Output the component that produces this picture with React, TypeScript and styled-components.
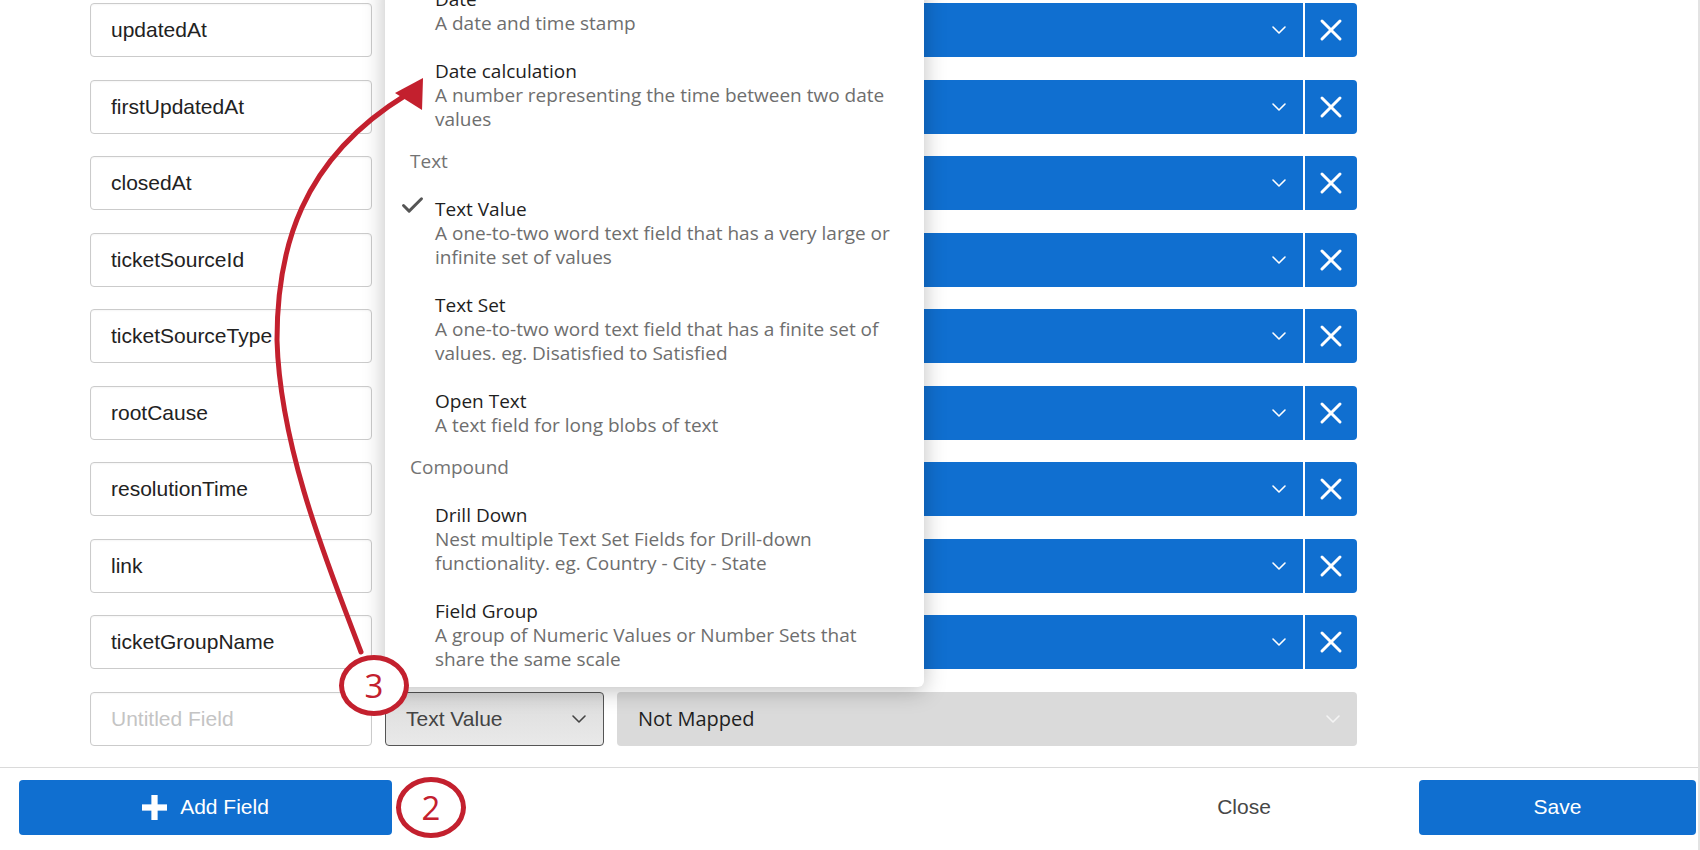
import React from 'react'
import styled, { createGlobalStyle } from 'styled-components'
import { Check, ChevronDown, X } from 'lucide-react'

const BLUE = '#106fd0'
const RED = '#c3202e'

const GlobalStyle = createGlobalStyle`
  html, body {
    margin: 0;
    padding: 0;
    background: #fff;
  }
  body {
    overflow: hidden;
  }
  * {
    box-sizing: border-box;
  }
`

const Page = styled.div`
  position: relative;
  width: 1700px;
  height: 850px;
  overflow: hidden;
  background: #fff;
  border-right: 2px solid #e3e3e3;
  font-family: 'Liberation Sans', Arial, sans-serif;
`

const FieldList = styled.div`
  display: flex;
  flex-direction: column;
  gap: 22.5px;
  padding: 3px 0 21.5px 90px;
`

const Row = styled.div`
  display: grid;
  grid-template-columns: 282px 219px 740px;
  column-gap: 13px;
  height: 54px;
`

const NameInput = styled.input`
  width: 100%;
  height: 100%;
  border: 1.5px solid #cbcbcb;
  border-radius: 4px;
  padding: 0 20px;
  font-family: 'Liberation Sans', Arial, sans-serif;
  font-size: 21px;
  color: #222;
  background: #fff;
  box-shadow: inset 0 1px 2px rgba(0, 0, 0, 0.04);
  outline: none;

  &::placeholder {
    color: #c4c4c4;
  }
`

const TypeCell = styled.div`
  position: relative;
`

const TypeSelect = styled.div`
  display: flex;
  align-items: center;
  justify-content: space-between;
  height: 100%;
  padding: 0 12px 0 20px;
  border: 1.5px solid #555;
  border-radius: 4px;
  background: linear-gradient(to bottom, #dcdcdc, #e9e9e9);
  color: #444;
  font-size: 21px;
`

const MapCell = styled.div`
  display: flex;
  gap: 2px;
  height: 100%;
`

const MapSelect = styled.div<{ $mapped: boolean }>`
  flex: 1;
  display: flex;
  align-items: center;
  justify-content: space-between;
  padding: 0 12px 0 21px;
  border-radius: ${({ $mapped }) => ($mapped ? '4px 0 0 4px' : '4px')};
  background: ${({ $mapped }) => ($mapped ? BLUE : '#dadada')};
  color: ${({ $mapped }) => ($mapped ? '#fff' : '#1f1f1f')};
  font-family: 'Open Sans', sans-serif;
  font-size: 20px;

  svg {
    color: ${({ $mapped }) => ($mapped ? '#fff' : '#f4f4f4')};
  }
`

const RemoveButton = styled.button`
  display: flex;
  align-items: center;
  justify-content: center;
  width: 52px;
  height: 100%;
  padding: 0;
  border: none;
  border-radius: 0 4px 4px 0;
  background: ${BLUE};
  color: #fff;
`

const Menu = styled.div`
  position: absolute;
  left: 0;
  bottom: calc(100% + 4.5px);
  width: 539px;
  padding-bottom: 4px;
  background: #fff;
  border-radius: 0 0 6px 6px;
  box-shadow: 0 4px 22px rgba(0, 0, 0, 0.25);
  font-family: 'Open Sans', sans-serif;
  font-size: 19px;
  line-height: 24px;
  z-index: 5;
`

const GroupLabel = styled.div`
  padding: 6px 0 12px 25px;
  color: #737373;
`

const Option = styled.div`
  position: relative;
  padding: 12px 20px 12px 50px;
`

const OptionTitle = styled.div`
  color: #1e1e1e;
`

const OptionLine = styled.div`
  color: #6e6e6e;
  white-space: nowrap;
`

const CheckMark = styled(Check)`
  position: absolute;
  left: 13.5px;
  top: 7px;
  color: #555;
`

const Footer = styled.div`
  display: flex;
  align-items: center;
  border-top: 1.5px solid #dadada;
  padding: 11.5px 2px 0 19px;
`

const PrimaryButton = styled.button<{ $width: number }>`
  display: flex;
  align-items: center;
  justify-content: center;
  gap: 13px;
  width: ${({ $width }) => $width}px;
  height: 55px;
  border: none;
  border-radius: 4px;
  background: ${BLUE};
  color: #fff;
  font-family: 'Liberation Sans', Arial, sans-serif;
  font-size: 21px;
`

const Spacer = styled.div`
  flex: 1;
`

const TextButton = styled.button`
  width: 200px;
  height: 55px;
  margin-right: 75px;
  border: none;
  background: none;
  color: #474747;
  font-family: 'Liberation Sans', Arial, sans-serif;
  font-size: 21px;
`

const Annotations = styled.svg`
  position: absolute;
  top: 0;
  left: 0;
  pointer-events: none;
  z-index: 10;
`

const Badge = styled.div<{ $x: number; $y: number }>`
  position: absolute;
  left: ${({ $x }) => $x}px;
  top: ${({ $y }) => $y}px;
  width: 70px;
  height: 61px;
  display: flex;
  align-items: center;
  justify-content: center;
  border: 5px solid ${RED};
  border-radius: 50%;
  background: #fff;
  color: ${RED};
  font-family: 'Open Sans', sans-serif;
  font-size: 33px;
  z-index: 11;
`

const fields = [
  'updatedAt',
  'firstUpdatedAt',
  'closedAt',
  'ticketSourceId',
  'ticketSourceType',
  'rootCause',
  'resolutionTime',
  'link',
  'ticketGroupName',
]

type MenuEntry =
  | { kind: 'group'; label: string }
  | { kind: 'option'; title: string; lines: string[]; checked?: boolean }

const menuEntries: MenuEntry[] = [
  { kind: 'option', title: 'Date', lines: ['A date and time stamp'] },
  {
    kind: 'option',
    title: 'Date calculation',
    lines: ['A number representing the time between two date', 'values'],
  },
  { kind: 'group', label: 'Text' },
  {
    kind: 'option',
    title: 'Text Value',
    lines: ['A one-to-two word text field that has a very large or', 'infinite set of values'],
    checked: true,
  },
  {
    kind: 'option',
    title: 'Text Set',
    lines: ['A one-to-two word text field that has a finite set of', 'values. eg. Disatisfied to Satisfied'],
  },
  { kind: 'option', title: 'Open Text', lines: ['A text field for long blobs of text'] },
  { kind: 'group', label: 'Compound' },
  {
    kind: 'option',
    title: 'Drill Down',
    lines: ['Nest multiple Text Set Fields for Drill-down', 'functionality. eg. Country - City - State'],
  },
  {
    kind: 'option',
    title: 'Field Group',
    lines: ['A group of Numeric Values or Number Sets that', 'share the same scale'],
  },
]

const PlusIcon = () => (
  <svg width="25" height="25" viewBox="0 0 24 24">
    <rect x="9" y="0" width="6" height="24" fill="#fff" />
    <rect x="0" y="9" width="24" height="6" fill="#fff" />
  </svg>
)

const FieldTypeMenu = () => (
  <Menu>
    {menuEntries.map((entry) =>
      entry.kind === 'group' ? (
        <GroupLabel key={entry.label}>{entry.label}</GroupLabel>
      ) : (
        <Option key={entry.title}>
          {entry.checked && <CheckMark size={27} strokeWidth={2.6} />}
          <OptionTitle>{entry.title}</OptionTitle>
          {entry.lines.map((line) => (
            <OptionLine key={line}>{line}</OptionLine>
          ))}
        </Option>
      ),
    )}
  </Menu>
)

const App = () => {
  return (
    <>
      <GlobalStyle />
      <Page>
        <FieldList>
          {fields.map((name) => (
            <Row key={name}>
              <NameInput defaultValue={name} />
              <TypeCell>
                <TypeSelect>
                  Text Value
                  <ChevronDown size={24} strokeWidth={1.6} />
                </TypeSelect>
              </TypeCell>
              <MapCell>
                <MapSelect $mapped>
                  <span />
                  <ChevronDown size={24} strokeWidth={1.6} />
                </MapSelect>
                <RemoveButton>
                  <X size={36} strokeWidth={2} />
                </RemoveButton>
              </MapCell>
            </Row>
          ))}
          <Row>
            <NameInput placeholder="Untitled Field" />
            <TypeCell>
              <FieldTypeMenu />
              <TypeSelect>
                Text Value
                <ChevronDown size={24} strokeWidth={1.6} />
              </TypeSelect>
            </TypeCell>
            <MapCell>
              <MapSelect $mapped={false}>
                Not Mapped
                <ChevronDown size={24} strokeWidth={1.6} />
              </MapSelect>
            </MapCell>
          </Row>
        </FieldList>

        <Footer>
          <PrimaryButton $width={373}>
            <PlusIcon />
            Add Field
          </PrimaryButton>
          <Spacer />
          <TextButton>Close</TextButton>
          <PrimaryButton $width={277}>Save</PrimaryButton>
        </Footer>

        <Annotations width="1700" height="850" viewBox="0 0 1700 850">
          <path
            d="M361 652 C330 570 280 450 277 340 C277 250 300 160 406 95"
            fill="none"
            stroke={RED}
            strokeWidth="5"
            strokeLinecap="round"
          />
          <polygon points="423,78 395,93 422,110" fill={RED} />
        </Annotations>
        <Badge $x={339} $y={655}>3</Badge>
        <Badge $x={396} $y={777}>2</Badge>
      </Page>
    </>
  )
}

export default App
